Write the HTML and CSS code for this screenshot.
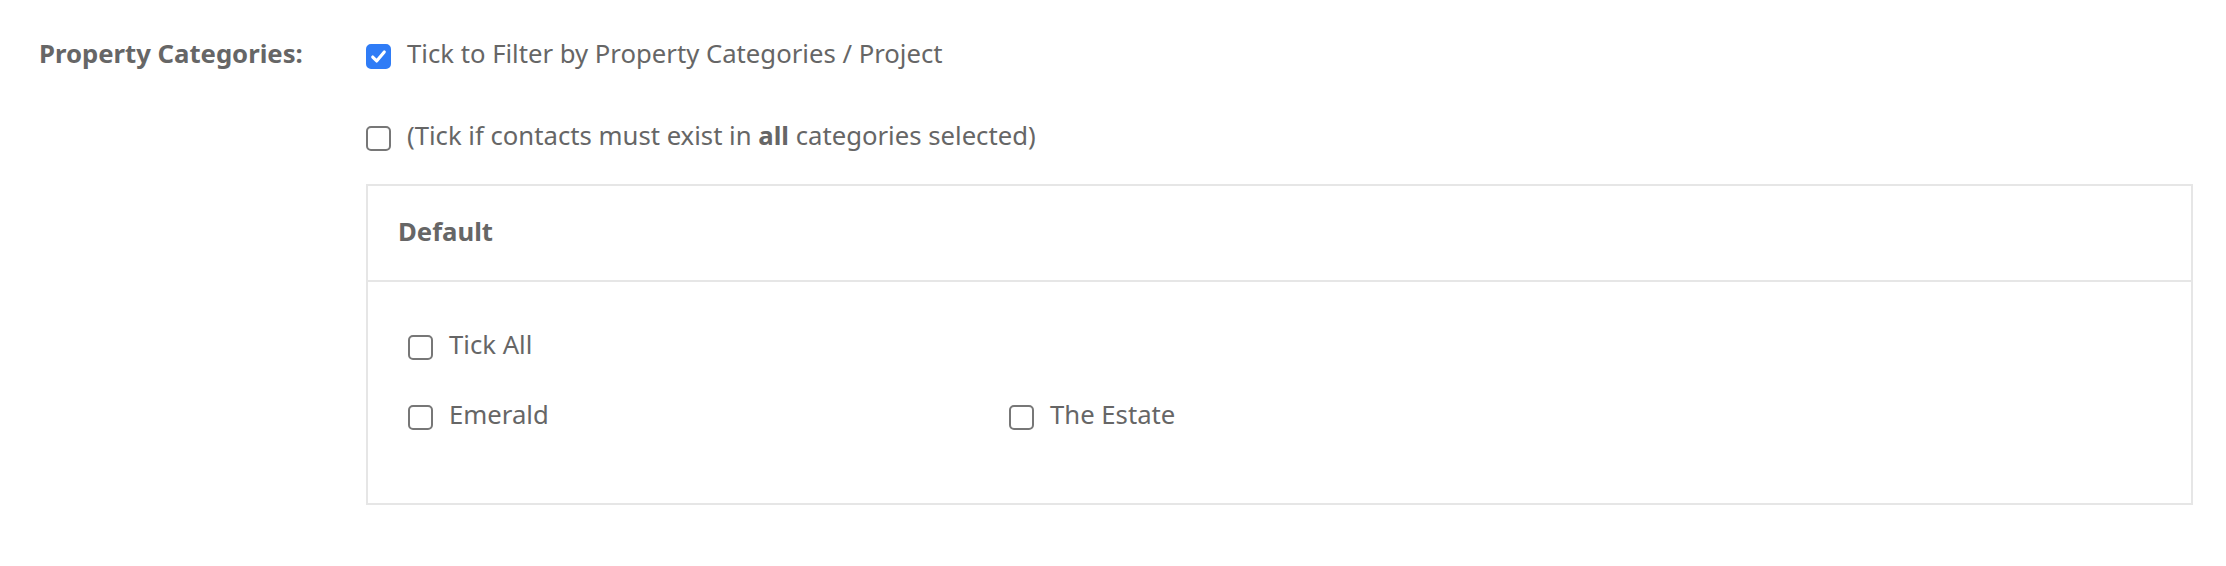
FILE: index.html
```html
<!DOCTYPE html>
<html lang="en">
<head>
    <meta charset="UTF-8">
    <title>Property Categories</title>

    <link rel="stylesheet" href="styles.css">
</head>
<body>

<form action="#" class="filter" name="categories">
    <div class="filter__label">Property Categories:</div>

    <div class="filter__field">
        <label class="check">
            <input type="checkbox" class="check__box" checked>
            <span>Tick to Filter by Property Categories / Project</span>
        </label>

        <label class="check check--all">
            <input type="checkbox" class="check__box">
            <span>(Tick if contacts must exist in <b>all</b> categories selected)</span>
        </label>

        <div class="panel">
            <div class="panel__head">Default</div>
            <div class="panel__body">
                <label class="check">
                    <input type="checkbox" class="check__box">
                    <span>Tick All</span>
                </label>
                <label class="check check--first">
                    <input type="checkbox" class="check__box">
                    <span>Emerald</span>
                </label>
                <label class="check">
                    <input type="checkbox" class="check__box">
                    <span>The Estate</span>
                </label>
            </div>
        </div>
    </div>
</form>

</body>
</html>
```

FILE: styles.css
```css
body{
    margin: 0;
    font-family: "Noto Sans", "Open Sans", sans-serif;
    font-size: 25.7px;
    line-height: 34px;
    color: #666;
    background-color: #fff;
}
.filter{
    display: flex;
    padding: 37px 33px 0 39px;
}
.filter__label{
    width: 327px;
    flex-shrink: 0;
    font-weight: 700;
}
.filter__field{
    flex: 1;
    min-width: 0;
}
.check{
    display: flex;
    align-items: center;
    gap: 16px;
    cursor: pointer;
}
.check--all{
    margin-top: 48px;
}
.check__box{
    appearance: none;
    -webkit-appearance: none;
    flex-shrink: 0;
    width: 25px;
    height: 25px;
    margin: 5px 0 0;
    border: 2px solid #777;
    border-radius: 5px;
    background-color: #fff;
    cursor: pointer;
}
.check__box:checked{
    border-color: #2f7cf6;
    background-color: #2f7cf6;
    background-image: url("data:image/svg+xml,%3Csvg xmlns='http://www.w3.org/2000/svg' viewBox='0 0 16 16'%3E%3Cpath d='M3.6 8.4l3 3 5.8-6.8' fill='none' stroke='%23fff' stroke-width='2.4' stroke-linecap='round' stroke-linejoin='round'/%3E%3C/svg%3E");
    background-size: 100% 100%;
}
.panel{
    margin-top: 31px;
    border: 2px solid #e6e6e6;
}
.panel__head{
    padding: 29px 30px 31px;
    font-weight: 700;
    border-bottom: 2px solid #e6e6e6;
}
.panel__body{
    display: grid;
    grid-template-columns: 601px 601px 1fr;
    row-gap: 36px;
    padding: 46px 40px 71px;
}
.check--first{
    grid-column: 1;
}
```
